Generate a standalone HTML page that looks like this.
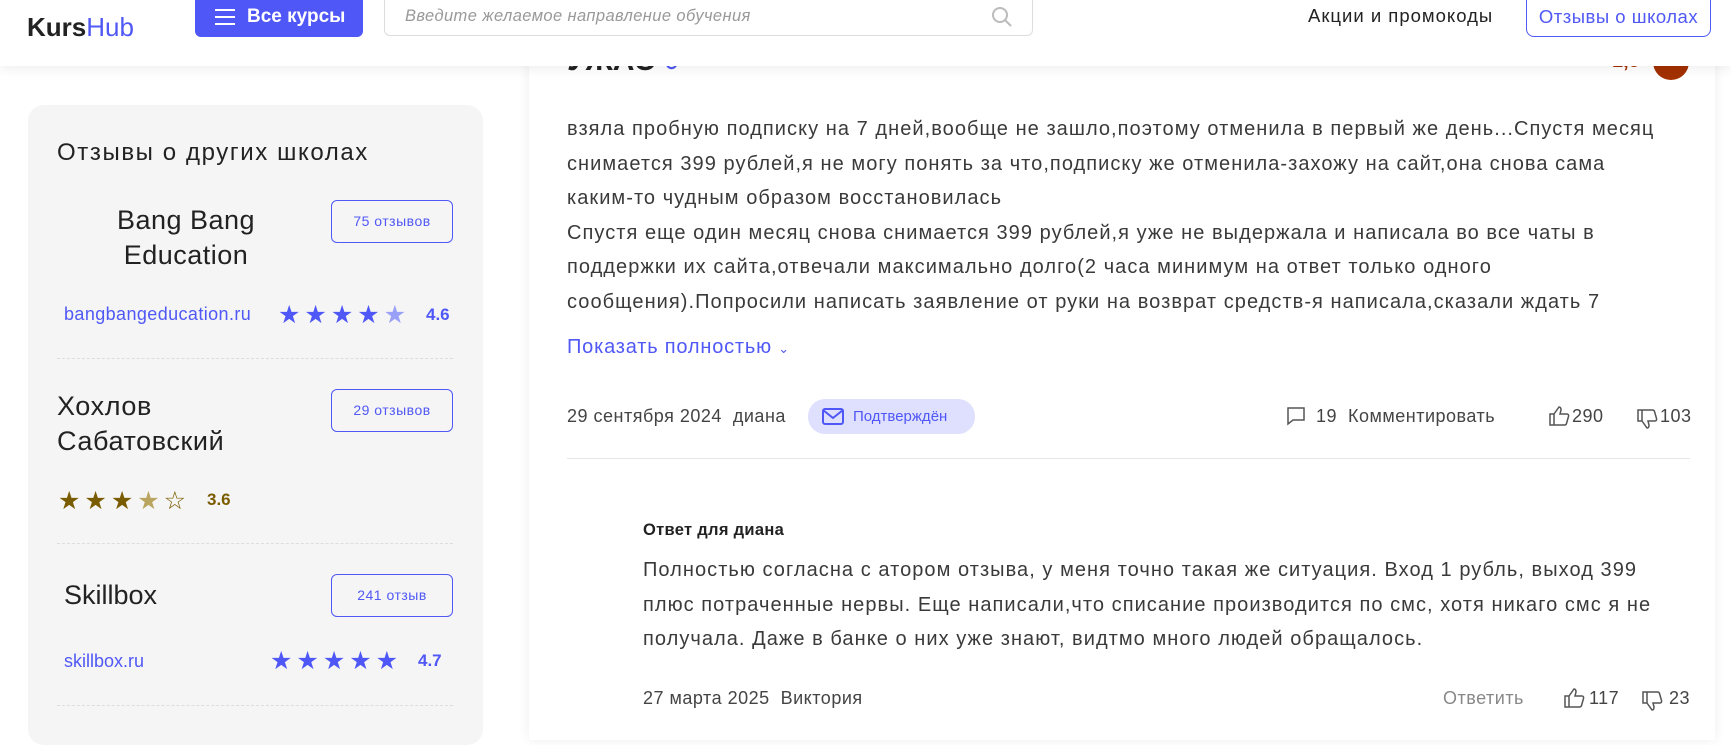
<!DOCTYPE html>
<html><head><meta charset="utf-8"><style>
*{margin:0;padding:0;box-sizing:border-box}
body{width:1731px;height:723px;overflow:hidden;background:#fff;font-family:"Liberation Sans",sans-serif;color:#333;position:relative}
.a{position:absolute;white-space:nowrap}
.hdr{position:absolute;left:0;top:0;width:1731px;height:66px;background:#fff;box-shadow:0 4px 10px rgba(0,0,0,.06);z-index:5}
.side{position:absolute;left:28px;top:105px;width:455px;height:640px;background:#f5f5f5;border-radius:16px}
.card{position:absolute;left:529px;top:20px;width:1186px;height:720px;background:#fff;box-shadow:0 0 12px rgba(0,0,0,.07)}
.btn{position:absolute;border:1px solid #5058f5;border-radius:6px;color:#5058f5;font-size:14px;text-align:center;line-height:41px;width:122px;height:43px;letter-spacing:.5px}
.star{color:#4f57f6;font-size:25px;letter-spacing:4px}
.dash{position:absolute;left:57px;width:396px;border-top:1px dashed #ddd}
.txt{font-size:20px;color:#3a3a3a;line-height:34.5px;letter-spacing:1.05px}
.m{font-size:18px;color:#444;letter-spacing:.5px}
</style></head><body>
<div class="side"></div>
<div class="a" style="left:57px;top:139px;font-size:24px;color:#222;letter-spacing:1.6px">Отзывы о других школах</div>
<div class="a" style="left:86px;top:203px;font-size:27px;color:#222;text-align:center;line-height:35px;width:200px;letter-spacing:.5px">Bang Bang<br>Education</div>
<div class="btn" style="left:331px;top:200px">75 отзывов</div>
<div class="a" style="left:64px;top:304px;font-size:18px;color:#5058f5;letter-spacing:.4px">bangbangeducation.ru</div>
<div class="a star" style="left:278px;top:300px">★★★★<span style="color:#9aa0f8">★</span></div>
<div class="a" style="left:426px;top:305px;font-size:17px;font-weight:bold;color:#4f57f6">4.6</div>
<div class="dash" style="top:358px"></div>
<div class="a" style="left:57px;top:389px;font-size:27px;color:#222;line-height:35px;letter-spacing:.6px">Хохлов<br>Сабатовский</div>
<div class="btn" style="left:331px;top:389px">29 отзывов</div>
<div class="a star" style="left:58px;top:486px;color:#7a5c00">★★★<span style="color:#b9a460">★</span>☆</div>
<div class="a" style="left:207px;top:490px;font-size:17px;font-weight:bold;color:#7a5c00">3.6</div>
<div class="dash" style="top:543px"></div>
<div class="a" style="left:64px;top:580px;font-size:27px;color:#222">Skillbox</div>
<div class="btn" style="left:331px;top:574px">241 отзыв</div>
<div class="a" style="left:64px;top:651px;font-size:18px;color:#5058f5">skillbox.ru</div>
<div class="a star" style="left:270px;top:646px">★★★★★</div>
<div class="a" style="left:418px;top:651px;font-size:17px;font-weight:bold;color:#4f57f6">4.7</div>
<div class="dash" style="top:705px"></div>

<div class="card"></div>
<div class="a" style="left:567px;top:44px;font-size:30px;font-weight:bold;color:#222">УЖАС <span style="color:#5058f5;font-size:18px">&#8635;</span></div>
<div class="a" style="left:1612px;top:50px;font-size:20px;font-weight:bold;color:#a33000">1,5</div>
<div class="a" style="left:1653px;top:44px;width:36px;height:36px;border-radius:50%;background:#a33000"></div>
<div class="hdr">
 <div class="a" style="left:27px;top:12px;font-size:26px;font-weight:bold;color:#222">Kurs<span style="color:#5058f5;font-weight:normal">Hub</span></div>
 <div class="a" style="left:195px;top:0;width:168px;height:37px;background:#4f57f6;border-radius:0 0 6px 6px;color:#fff;font-weight:bold;font-size:19px;line-height:34px">
  <span style="position:absolute;left:20px;top:9px;width:20px;height:2px;background:#fff;box-shadow:0 7px 0 #fff,0 14px 0 #fff"></span>
  <span style="position:absolute;left:52px">Все курсы</span></div>
 <div class="a" style="left:384px;top:-2px;width:649px;height:38px;border:1px solid #ddd;border-radius:0 0 6px 6px;font-style:italic;color:#999;font-size:16.5px;line-height:34px;padding-left:20px;letter-spacing:.4px">Введите желаемое направление обучения
  <svg style="position:absolute;right:18px;top:6px" width="24" height="24" viewBox="0 0 24 24" fill="none" stroke="#bbb" stroke-width="2"><circle cx="10" cy="10" r="7"/><path d="M15 15l6 6"/></svg></div>
 <div class="a" style="left:1308px;top:5px;font-size:18.5px;color:#222;letter-spacing:1px">Акции и промокоды</div>
 <div class="a" style="left:1526px;top:-2px;width:185px;height:39px;border:1px solid #5058f5;border-radius:0 0 8px 8px;color:#5058f5;font-size:18.5px;text-align:center;line-height:36px;letter-spacing:.5px">Отзывы о школах</div>
</div>

<div class="a txt" style="left:567px;top:112px">взяла пробную подписку на 7 дней,вообще не зашло,поэтому отменила в первый же день...Спустя месяц<br>снимается 399 рублей,я не могу понять за что,подписку же отменила-захожу на сайт,она снова сама<br>каким-то чудным образом восстановилась<br>Спустя еще один месяц снова снимается 399 рублей,я уже не выдержала и написала во все чаты в<br>поддержки их сайта,отвечали максимально долго(2 часа минимум на ответ только одного<br>сообщения).Попросили написать заявление от руки на возврат средств-я написала,сказали ждать 7</div>
<div class="a" style="left:567px;top:336px;font-size:20px;color:#5058f5;letter-spacing:.8px">Показать полностью <span style="font-size:13px">&#8964;</span></div>

<div class="a m" style="left:567px;top:406px">29 сентября 2024 &nbsp;диана</div>
<div class="a" style="left:808px;top:399px;width:167px;height:35px;border-radius:17px;background:#dfe0fd;color:#4f57f6;font-size:15px;line-height:35px;padding-left:45px">Подтверждён
 <svg style="position:absolute;left:14px;top:9px" width="22" height="17" viewBox="0 0 22 17" fill="none" stroke="#4f57f6" stroke-width="2"><rect x="1" y="1" width="20" height="15" rx="2"/><path d="M1 2l10 8 10-8"/></svg></div>
<svg class="a" style="left:1286px;top:406px" width="20" height="20" viewBox="0 0 20 20" fill="none" stroke="#555" stroke-width="1.5"><path d="M2 2h16v12H7l-5 4z"/></svg>
<div class="a m" style="left:1316px;top:406px">19 &nbsp;Комментировать</div>
<svg class="a" style="left:1548px;top:405px" width="22" height="22" viewBox="0 0 22 22" fill="none" stroke="#555" stroke-width="1.5"><path d="M2 9h4v11H2zM6 9l5-7c2 0 2 2 2 3l-1 4h7c1 0 2 1 1.5 2.5l-2 7c-.3 1-1 1.5-2 1.5H6"/></svg>
<div class="a m" style="left:1572px;top:406px">290</div>
<svg class="a" style="left:1636px;top:408px;transform:scaleY(-1)" width="22" height="22" viewBox="0 0 22 22" fill="none" stroke="#555" stroke-width="1.5"><path d="M2 9h4v11H2zM6 9l5-7c2 0 2 2 2 3l-1 4h7c1 0 2 1 1.5 2.5l-2 7c-.3 1-1 1.5-2 1.5H6"/></svg>
<div class="a m" style="left:1660px;top:406px">103</div>
<div class="a" style="left:567px;top:458px;width:1123px;border-top:1px solid #e6e6e6"></div>

<div class="a" style="left:643px;top:521px;font-size:16.5px;font-weight:bold;color:#222;letter-spacing:.3px">Ответ для диана</div>
<div class="a txt" style="left:643px;top:553px">Полностью согласна с атором отзыва, у меня точно такая же ситуация. Вход 1 рубль, выход 399<br>плюс потраченные нервы. Еще написали,что списание производится по смс, хотя никаго смс я не<br>получала. Даже в банке о них уже знают, видтмо много людей обращалось.</div>
<div class="a m" style="left:643px;top:688px">27 марта 2025 &nbsp;Виктория</div>
<div class="a m" style="left:1443px;top:688px;color:#888">Ответить</div>
<svg class="a" style="left:1563px;top:687px" width="22" height="22" viewBox="0 0 22 22" fill="none" stroke="#555" stroke-width="1.5"><path d="M2 9h4v11H2zM6 9l5-7c2 0 2 2 2 3l-1 4h7c1 0 2 1 1.5 2.5l-2 7c-.3 1-1 1.5-2 1.5H6"/></svg>
<div class="a m" style="left:1589px;top:688px">117</div>
<svg class="a" style="left:1641px;top:690px;transform:scaleY(-1)" width="22" height="22" viewBox="0 0 22 22" fill="none" stroke="#555" stroke-width="1.5"><path d="M2 9h4v11H2zM6 9l5-7c2 0 2 2 2 3l-1 4h7c1 0 2 1 1.5 2.5l-2 7c-.3 1-1 1.5-2 1.5H6"/></svg>
<div class="a m" style="left:1669px;top:688px">23</div>
</body></html>
